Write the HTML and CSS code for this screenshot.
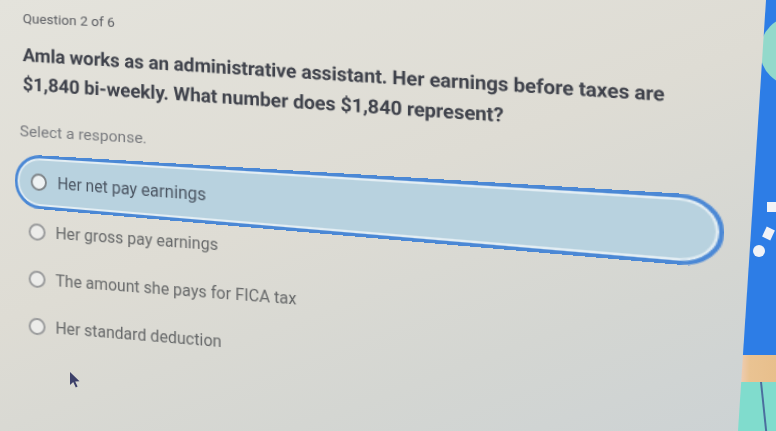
FILE: index.html
```html
<!DOCTYPE html>
<html lang="en">
<head>
<meta charset="utf-8">
<title>Question 2 of 6</title>
<link rel="stylesheet" href="styles.css">
</head>
<body>
<div class="screen">
  <main class="content">
    <div class="progress">Question 2 of 6</div>
    <h1 class="question">Amla works as an administrative assistant. Her earnings before taxes are<br>$1,840 bi-weekly. What number does $1,840 represent?</h1>
    <p class="prompt">Select a response.</p>
    <ul class="options">
      <li class="option selected"><span class="radio"></span><span class="label">Her net pay earnings</span></li>
      <li class="option"><span class="radio"></span><span class="label">Her gross pay earnings</span></li>
      <li class="option"><span class="radio"></span><span class="label">The amount she pays for FICA tax</span></li>
      <li class="option"><span class="radio"></span><span class="label">Her standard deduction</span></li>
    </ul>
  </main>
  <aside class="art">
    <div class="art-sky">
      <span class="art-moon"></span>
      <span class="art-sq art-sq1"></span>
      <span class="art-sq art-sq2"></span>
      <span class="art-dot"></span>
    </div>
    <div class="art-sand"></div>
    <div class="art-sea"><span class="art-line"></span></div>
  </aside>
  <svg class="cursor" width="12" height="18" viewBox="0 0 12 18" aria-hidden="true">
    <path d="M1 1 L1 14 L4.2 11 L6.8 16.5 L8.6 15.6 L6.2 10.4 L10.5 10.2 Z" fill="#3d416a"/>
  </svg>
</div>
</body>
</html>
```

FILE: styles.css
```css
html, body {
  margin: 0;
  padding: 0;
}

body {
  width: 776px;
  height: 431px;
  overflow: hidden;
  font-family: Roboto, "Liberation Sans", Arial, sans-serif;
}

.screen {
  position: relative;
  width: 776px;
  height: 431px;
  display: flex;
  overflow: hidden;
  background: linear-gradient(160deg, #e4e3dc 0%, #dedcd4 45%, #d4d6d2 75%, #ccd2d4 100%);
}

.content {
  flex: 1;
  padding: 8px 0 0 23px;
  transform: perspective(1400px) rotateY(-10deg) skewY(3.2deg);
  transform-origin: 0 130px;
}

.progress {
  font-size: 13.6px;
  line-height: 18px;
  color: #5b5d62;
}

.question {
  margin: 14px 0 0 0;
  font-size: 18.5px;
  line-height: 29px;
  font-weight: 700;
  color: #3f424b;
  letter-spacing: -0.1px;
  transform: skewY(0.8deg);
  transform-origin: 0 0;
}

.prompt {
  margin: 22px 0 0 -3px;
  font-size: 15.5px;
  line-height: 20px;
  color: #797b7f;
}

.options {
  list-style: none;
  margin: 13px 0 0 -8px;
  padding: 0;
  width: 655px;
}

.option {
  display: flex;
  align-items: center;
  gap: 10px;
  height: 47px;
  padding-left: 14px;
  box-sizing: border-box;
  font-size: 15.6px;
  color: #666869;
}

.option.selected {
  width: 560px;
  height: 53px;
  border-radius: 27px;
  background: #b8d2df;
  border: 3px solid #4b88d5;
  box-shadow: inset 0 0 0 2px #e2edf3;
  color: #4b5562;
  padding-left: 14px;
  gap: 11px;
  transform: perspective(950px) rotateY(-20deg);
  transform-origin: 0 0;
}

.radio {
  flex: none;
  width: 13px;
  height: 13px;
  border-radius: 50%;
  border: 2px solid #9a9b9c;
  background: #ececea;
}

.option.selected .radio {
  border-color: #80868a;
  background: #eef2f3;
}

.art {
  flex: none;
  width: 38px;
  display: flex;
  flex-direction: column;
  clip-path: polygon(28px 0, 100% 0, 100% 100%, 0 100%);
}

.art-sky {
  position: relative;
  height: 355px;
  background: #2d7de6;
  overflow: hidden;
}

.art-moon {
  position: absolute;
  left: 22px;
  top: 16px;
  width: 70px;
  height: 70px;
  border-radius: 50%;
  background: #93d9cb;
}

.art-sq {
  position: absolute;
  background: #f1f3f7;
}

.art-sq1 {
  left: 29px;
  top: 202px;
  width: 10px;
  height: 10px;
}

.art-sq2 {
  left: 26px;
  top: 228px;
  width: 9px;
  height: 11px;
  transform: rotate(25deg);
}

.art-dot {
  position: absolute;
  left: 15px;
  top: 245px;
  width: 12px;
  height: 12px;
  border-radius: 50%;
  background: #f1f3f7;
}

.art-sand {
  height: 27px;
  background: linear-gradient(90deg, #efcfbd 0%, #eac392 30%, #e8bf8c 100%);
}

.art-sea {
  position: relative;
  flex: 1;
  background: #80dccd;
}

.art-line {
  position: absolute;
  left: 22px;
  top: 0;
  width: 2px;
  height: 60px;
  background: #4b6f9e;
  transform: rotate(-6deg);
  transform-origin: top center;
}

.cursor {
  position: absolute;
  left: 69px;
  top: 371px;
}
```
